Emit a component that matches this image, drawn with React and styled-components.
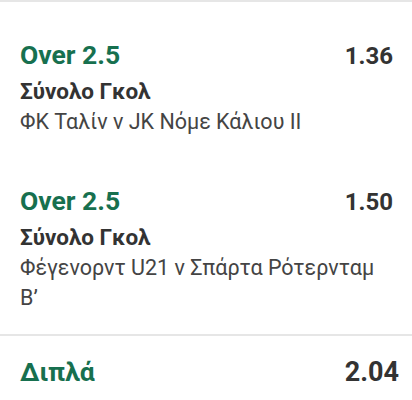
import styled, { createGlobalStyle } from "styled-components";

const GlobalStyle = createGlobalStyle`
  body {
    margin: 0;
    background: #ffffff;
    font-family: Roboto, "Noto Sans", sans-serif;
  }
`;

const bets = [
  { pick: "Over 2.5", odds: "1.36", market: "Σύνολο Γκολ", match: "ΦΚ Ταλίν v JK Νόμε Κάλιου II" },
  { pick: "Over 2.5", odds: "1.50", market: "Σύνολο Γκολ", match: "Φέγενορντ U21 v Σπάρτα Ρότερνταμ B’" },
];

const Slip = styled.div`
  width: 412px;
  border-top: 2px solid #e6e6e6;
  padding-top: 10px;
`;

const Bet = styled.div`
  padding: 27px 19px 21px 20px;
`;

const TopRow = styled.div`
  display: flex;
  justify-content: space-between;
  align-items: baseline;
  line-height: 32px;
`;

const Pick = styled.div`
  font-size: 26.5px;
  font-weight: 700;
  color: #17704f;
`;

const Odds = styled.div`
  font-size: ${(p) => (p.$total ? "27px" : "24px")};
  font-weight: 700;
  color: #333333;
`;

const Market = styled.div`
  margin-top: 5px;
  font-size: 22.5px;
  font-weight: 700;
  line-height: 28px;
  color: #333333;
`;

const Match = styled.div`
  margin-top: 2px;
  font-size: 21.5px;
  line-height: 30px;
  color: #444444;
`;

const Divider = styled.hr`
  margin: 0;
  border: none;
  border-top: 2px solid #e6e6e6;
`;

const Total = styled(TopRow)`
  padding: 20px 13px 20px 20px;
`;

export default function App() {
  return (
    <>
      <GlobalStyle />
      <Slip>
        {bets.map((b, i) => (
          <Bet key={i}>
            <TopRow>
              <Pick>{b.pick}</Pick>
              <Odds>{b.odds}</Odds>
            </TopRow>
            <Market>{b.market}</Market>
            <Match>{b.match}</Match>
          </Bet>
        ))}
        <Divider />
        <Total>
          <Pick>Διπλά</Pick>
          <Odds $total>2.04</Odds>
        </Total>
      </Slip>
    </>
  );
}
